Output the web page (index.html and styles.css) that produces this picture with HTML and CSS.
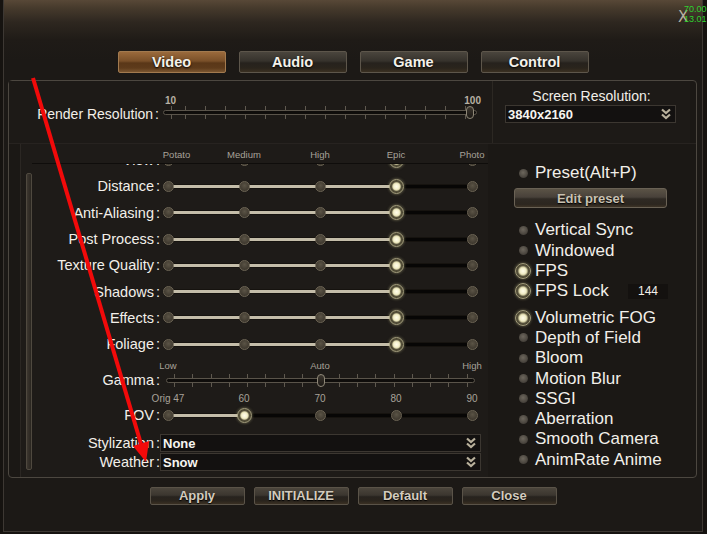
FILE: index.html
```html
<!DOCTYPE html>
<html>
<head>
<meta charset="utf-8">
<title>Video Settings</title>
<link rel="stylesheet" href="styles.css">
</head>
<body>
<div class="window">
  <div class="header">
    <nav class="tabs">
      <button class="tab active">Video</button>
      <button class="tab">Audio</button>
      <button class="tab">Game</button>
      <button class="tab">Control</button>
    </nav>
  </div>

  <div class="panel">
    <div class="top-section">
      <div class="render-res">
        <span class="render-label">Render Resolution<span class="colon">:</span></span>
        <div class="range range-render">
          <div class="range-marks"><span>10</span><span>100</span></div>
          <div class="range-scale ticks-20">
            <div class="range-track end"><span class="range-thumb"></span></div>
          </div>
        </div>
      </div>
      <div class="screen-res">
        <div class="screen-res-title">Screen Resolution:</div>
        <div class="dropdown dropdown-screen">
          <span>3840x2160</span>
          <svg class="chev" viewBox="0 0 12 12" width="12" height="12"><path d="M2 1.5 L6 5 L10 1.5 M2 6.5 L6 10 L10 6.5" fill="none" stroke="#b9b19c" stroke-width="2.2"/></svg>
        </div>
      </div>
    </div>

    <div class="lower-section">
      <div class="quality-area">
        <div class="scrollbar"></div>
        <div class="quality-content">
          <div class="qrow level-head">
            <span></span>
            <div class="levels">
              <span class="lvl lvl-first">Potato</span><span class="lvl">Medium</span><span class="lvl">High</span><span class="lvl">Epic</span><span class="lvl">Photo</span>
            </div>
          </div>

          <div class="viewport">
            <div class="rows">
              <div class="qrow srow"><span class="row-label">View<span class="colon">:</span></span>
                <div class="steps fill-75"><i class="knob"></i><i class="knob"></i><i class="knob"></i><i class="knob on"></i><i class="knob"></i></div></div>
              <div class="qrow srow"><span class="row-label">Distance<span class="colon">:</span></span>
                <div class="steps fill-75"><i class="knob"></i><i class="knob"></i><i class="knob"></i><i class="knob on"></i><i class="knob"></i></div></div>
              <div class="qrow srow"><span class="row-label">Anti-Aliasing<span class="colon">:</span></span>
                <div class="steps fill-75"><i class="knob"></i><i class="knob"></i><i class="knob"></i><i class="knob on"></i><i class="knob"></i></div></div>
              <div class="qrow srow"><span class="row-label">Post Process<span class="colon">:</span></span>
                <div class="steps fill-75"><i class="knob"></i><i class="knob"></i><i class="knob"></i><i class="knob on"></i><i class="knob"></i></div></div>
              <div class="qrow srow"><span class="row-label">Texture Quality<span class="colon">:</span></span>
                <div class="steps fill-75"><i class="knob"></i><i class="knob"></i><i class="knob"></i><i class="knob on"></i><i class="knob"></i></div></div>
              <div class="qrow srow"><span class="row-label">Shadows<span class="colon">:</span></span>
                <div class="steps fill-75"><i class="knob"></i><i class="knob"></i><i class="knob"></i><i class="knob on"></i><i class="knob"></i></div></div>
              <div class="qrow srow"><span class="row-label">Effects<span class="colon">:</span></span>
                <div class="steps fill-75"><i class="knob"></i><i class="knob"></i><i class="knob"></i><i class="knob on"></i><i class="knob"></i></div></div>
              <div class="qrow srow"><span class="row-label">Foliage<span class="colon">:</span></span>
                <div class="steps fill-75"><i class="knob"></i><i class="knob"></i><i class="knob"></i><i class="knob on"></i><i class="knob"></i></div></div>
            </div>
          </div>

          <div class="qrow scale-head gamma-head">
            <span></span>
            <div class="levels"><span class="lvl">Low</span><span class="lvl"></span><span class="lvl">Auto</span><span class="lvl"></span><span class="lvl">High</span></div>
          </div>
          <div class="qrow gamma-row">
            <span class="row-label">Gamma<span class="colon">:</span></span>
            <div class="range-scale gamma-scale ticks-gamma">
              <div class="range-track mid"><span class="range-thumb"></span></div>
            </div>
          </div>

          <div class="qrow scale-head fov-head">
            <span></span>
            <div class="levels num"><span class="lvl">Orig 47</span><span class="lvl">60</span><span class="lvl">70</span><span class="lvl">80</span><span class="lvl">90</span></div>
          </div>
          <div class="qrow fov-row">
            <span class="row-label">FOV<span class="colon">:</span></span>
            <div class="steps fill-25"><i class="knob"></i><i class="knob on"></i><i class="knob"></i><i class="knob"></i><i class="knob"></i></div>
          </div>

          <div class="qrow drow first-drop">
            <span class="row-label">Stylization<span class="colon">:</span></span>
            <div class="dropdown dropdown-wide"><span>None</span>
              <svg class="chev" viewBox="0 0 12 12" width="12" height="12"><path d="M2 1.5 L6 5 L10 1.5 M2 6.5 L6 10 L10 6.5" fill="none" stroke="#b9b19c" stroke-width="2.2"/></svg></div>
          </div>
          <div class="qrow drow">
            <span class="row-label">Weather<span class="colon">:</span></span>
            <div class="dropdown dropdown-wide"><span>Snow</span>
              <svg class="chev" viewBox="0 0 12 12" width="12" height="12"><path d="M2 1.5 L6 5 L10 1.5 M2 6.5 L6 10 L10 6.5" fill="none" stroke="#b9b19c" stroke-width="2.2"/></svg></div>
          </div>
        </div>
      </div>

      <div class="options">
        <div class="opt"><i class="radio"></i><span>Preset(Alt+P)</span></div>
        <button class="edit-preset">Edit preset</button>
        <div class="opt-group">
          <div class="opt"><i class="radio"></i><span>Vertical Sync</span></div>
          <div class="opt"><i class="radio"></i><span>Windowed</span></div>
          <div class="opt"><i class="radio on"></i><span>FPS</span></div>
          <div class="opt"><i class="radio on"></i><span>FPS Lock</span><span class="num-box">144</span></div>
        </div>
        <div class="opt-group second">
          <div class="opt"><i class="radio on"></i><span>Volumetric FOG</span></div>
          <div class="opt"><i class="radio"></i><span>Depth of Field</span></div>
          <div class="opt"><i class="radio"></i><span>Bloom</span></div>
          <div class="opt"><i class="radio"></i><span>Motion Blur</span></div>
          <div class="opt"><i class="radio"></i><span>SSGI</span></div>
          <div class="opt"><i class="radio"></i><span>Aberration</span></div>
          <div class="opt"><i class="radio"></i><span>Smooth Camera</span></div>
          <div class="opt"><i class="radio"></i><span>AnimRate Anime</span></div>
        </div>
      </div>
    </div>
  </div>

  <div class="footer">
    <button class="btn">Apply</button>
    <button class="btn">INITIALIZE</button>
    <button class="btn">Default</button>
    <button class="btn">Close</button>
  </div>
</div>

<div class="close-x">X</div>
<div class="fps-stats"><span>70.00</span><span>13.01</span></div>

<svg class="annotation" width="707" height="534" viewBox="0 0 707 534">
  <line x1="33" y1="78" x2="141" y2="444" stroke="#f20a0a" stroke-width="4"/>
  <polygon points="146,462 133,446 149,441" fill="#f20a0a"/>
</svg>
</body>
</html>
```

FILE: styles.css
```css
* { box-sizing: border-box; margin: 0; padding: 0; }

html, body { width: 707px; height: 534px; overflow: hidden; }

body {
  position: relative;
  background: #161310;
  font-family: "Liberation Sans", Arial, sans-serif;
  color: #f2efe9;
}

button { font-family: inherit; cursor: default; }

.window {
  margin-left: 3px;
  width: 700px;
  height: 532px;
  border: 1px solid #3d3833;
  border-top: none;
  background: linear-gradient(to bottom, #584837 0px, #463a2c 8px, #2e2720 22px, #1f1b17 40px, #1c1916 60px, #1c1916 100%);
}

/* header / tabs */
.header { height: 80px; padding-top: 51px; }

.tabs { display: flex; justify-content: center; gap: 13px; }

.tab {
  width: 108px;
  height: 22px;
  border: 1px solid #5d564b;
  border-radius: 2px;
  background: linear-gradient(to bottom, #4a453d 0%, #36322c 45%, #26221d 55%, #2a241c 80%, #3a3022 100%);
  color: #f4f1ea;
  font-weight: bold;
  font-size: 14.5px;
  text-shadow: 0 1px 2px #000;
}

.tab.active {
  border-color: #a27a4f;
  background: linear-gradient(to bottom, #9a6a3c 0%, #7a5029 45%, #5a3718 55%, #5e3b1b 80%, #7a5530 100%);
}

/* main panel */
.panel {
  margin-left: 4px;
  width: 689px;
  height: 398px;
  border: 1px solid #4c4740;
  border-radius: 4px;
  background: #1b1815;
}

.top-section { display: flex; height: 62px; }

.render-res {
  width: 483px;
  display: flex;
  align-items: flex-start;
  padding-top: 14px;
  background: #1d1a17;
}

.render-label {
  width: 150px;
  margin-top: 11px;
  text-align: right;
  font-size: 14px;
  line-height: 16px;
  white-space: nowrap;
}

.colon { margin-left: 2px; }

.range-render { margin-left: 4px; width: 314px; }

.range-marks {
  display: flex;
  justify-content: space-between;
  padding-left: 2px;
  margin-right: -4px;
  height: 11px;
  font-size: 10px;
  line-height: 11px;
  font-weight: bold;
  color: #b7b0a3;
}

.range-scale { height: 13px; padding-top: 4px; }

.ticks-20 {
  background-image: repeating-linear-gradient(to right, transparent 0px 2px, #5f594f 2px 3px, transparent 3px 20px);
  background-position: 20px 0;
}

.range-track {
  height: 5px;
  border: 1px solid #5a544a;
  border-radius: 3px;
  background: #0f0d0b;
  display: flex;
  align-items: center;
}
.range-track.end { justify-content: flex-end; padding-right: 2px; }
.range-track.mid { justify-content: center; }

.range-thumb {
  width: 8px;
  height: 13px;
  flex: none;
  border: 1px solid #8e8777;
  border-radius: 4px;
  background: linear-gradient(to bottom, #3d372f, #1c1915);
}

.screen-res {
  width: 198px;
  border-left: 1px solid #2c2823;
  background: #1d1a17;
  padding-top: 7px;
}

.screen-res-title { text-align: center; font-size: 14px; line-height: 16px; }

.dropdown {
  display: flex;
  align-items: center;
  justify-content: space-between;
  border: 1px solid #3c3731;
  background: #131110;
  font-weight: bold;
  font-size: 13px;
  color: #f7f5f0;
  padding: 0 3px 0 2px;
}

.dropdown-screen { margin: 1px 0 0 12px; width: 171px; height: 18px; }

.chev { flex: none; }

/* lower section */
.lower-section {
  display: flex;
  height: 334px;
  border-top: 1px solid #272320;
}

.quality-area {
  display: flex;
  margin-left: 11px;
  width: 468px;
  border-left: 1px solid #2b2723;
  padding-left: 5px;
  background: #1e1b18;
}

.scrollbar {
  width: 6px;
  height: 297px;
  margin-top: 29px;
  flex: none;
  border: 1px solid #4f493f;
  border-radius: 2px;
  background: linear-gradient(to right, #3c362f, #2a2620);
}

.quality-content { width: 456px; }

.qrow {
  display: grid;
  grid-template-columns: 128px 315px;
  column-gap: 2.5px;
  align-items: center;
}

.row-label {
  text-align: right;
  font-size: 14.5px;
  line-height: 16px;
  white-space: nowrap;
}

.level-head { height: 19px; align-items: start; padding-top: 6px; }

.levels {
  display: grid;
  grid-template-columns: repeat(5, 11px);
  justify-content: space-between;
  font-size: 9.5px;
  line-height: 10px;
  color: #a8a298;
}

.lvl { display: flex; justify-content: center; white-space: nowrap; }
.lvl-first { padding-left: 14px; }

.levels.num { font-size: 10px; line-height: 11px; }

.viewport { overflow: hidden; border-top: 1px solid #0f0d0b; }
.rows { margin-top: -17px; }

.srow { height: 26.3px; }

.steps {
  position: relative;
  height: 15px;
  display: grid;
  grid-template-columns: repeat(5, 11px);
  justify-content: space-between;
  justify-items: center;
  align-items: center;
}

.steps::before {
  content: "";
  position: absolute;
  left: 5.5px;
  right: 5.5px;
  top: 6px;
  height: 3px;
  background: linear-gradient(to right, #c4bda9 0, #c4bda9 var(--f), #070605 var(--f), #070605 100%);
  box-shadow: 0 0 0 1px rgba(20, 17, 14, 0.8);
}
.fill-75 { --f: 75%; }
.fill-25 { --f: 25%; }

.knob {
  position: relative;
  z-index: 1;
  width: 11px;
  height: 11px;
  border-radius: 50%;
  background: radial-gradient(circle at 50% 40%, #5b5446 0%, #3f392f 70%);
  border: 1px solid #6c6454;
}

.knob.on {
  width: 15px;
  height: 15px;
  margin: -2px;
  border: 1px solid #a8a280;
  background: radial-gradient(circle, #fffdea 0%, #f3efcc 30%, #d9d4a8 40%, #57523d 52%, #48432f 68%, #77715a 86%, #8c8668 100%);
  box-shadow: 0 0 3px rgba(225, 220, 160, 0.5);
}

.scale-head { height: 11px; }
.gamma-head { margin-top: 3px; }
.fov-head { margin-top: 4px; }

.gamma-row { height: 18px; }
.fov-row { height: 22px; }

.gamma-scale { margin-left: 3.5px; width: 309px; }

.ticks-gamma {
  background-image: repeating-linear-gradient(to right, transparent 0px 8px, #5f594f 8px 9px, transparent 9px 18.3px);
}

.drow { height: 18px; margin-top: 1px; }
.first-drop { margin-top: 8px; }
.dropdown-wide { width: 321px; height: 18px; margin-left: -2.5px; }

/* options column */
.options {
  flex: 1;
  padding: 19px 28px 0 29px;
}

.opt {
  display: flex;
  align-items: center;
  gap: 6px;
  height: 20.3px;
  font-size: 17px;
  line-height: 20px;
  white-space: nowrap;
}

.radio {
  width: 12px;
  height: 12px;
  flex: none;
  display: flex;
  align-items: center;
  justify-content: center;
}
.radio::before {
  content: "";
  width: 9px;
  height: 9px;
  flex: none;
  border-radius: 50%;
  background: radial-gradient(circle at 45% 40%, #6d675d 0%, #4b463f 60%, #2e2b27 100%);
}
.radio.on::before {
  width: 14px;
  height: 14px;
  border: 1px solid #a39d7c;
  background: radial-gradient(circle, #fffdea 0%, #f0ecc8 30%, #d2cda2 40%, #57523d 54%, #48432f 70%, #77715a 88%);
  box-shadow: 0 0 3px rgba(225, 220, 160, 0.45);
}

.edit-preset {
  display: block;
  margin: 5px 0 0 -3px;
  width: 153px;
  height: 20px;
  border: 1px solid #6a6255;
  border-radius: 3px;
  background: linear-gradient(to bottom, #5b5346 0%, #48413a 45%, #2f2a24 55%, #2c261f 85%, #3d3326 100%);
  color: #c9c1b2;
  font-weight: bold;
  font-size: 13px;
  text-shadow: 0 1px 1px #000;
}

.opt-group { margin-top: 12px; }
.opt-group.second { margin-top: 6px; }

.num-box {
  margin-left: auto;
  width: 40px;
  height: 15px;
  background: #14110f;
  font-size: 12px;
  line-height: 15px;
  text-align: center;
}

/* footer */
.footer {
  display: flex;
  justify-content: center;
  gap: 9px;
  margin-top: 9px;
}

.btn {
  width: 95px;
  height: 18px;
  border: 1px solid #5a5348;
  border-radius: 2px;
  background: linear-gradient(to bottom, #4b453c 0%, #3b362f 45%, #27231e 55%, #2a241d 80%, #3a3023 100%);
  color: #d3cbbe;
  font-weight: bold;
  font-size: 13px;
  line-height: 16px;
  text-shadow: 0 1px 1px #000;
}

/* overlays */
.close-x {
  position: absolute;
  left: 678px;
  top: 9px;
  font-family: "DejaVu Sans", sans-serif;
  font-size: 15px;
  line-height: 16px;
  color: #b8b0a2;
}

.fps-stats {
  position: absolute;
  left: 684px;
  top: 4px;
  display: flex;
  flex-direction: column;
  font-family: "Liberation Sans Narrow", "Liberation Sans", sans-serif;
  font-size: 9px;
  line-height: 10px;
  color: #2fd12f;
}

.annotation { position: absolute; left: 0; top: 0; pointer-events: none; }
```
